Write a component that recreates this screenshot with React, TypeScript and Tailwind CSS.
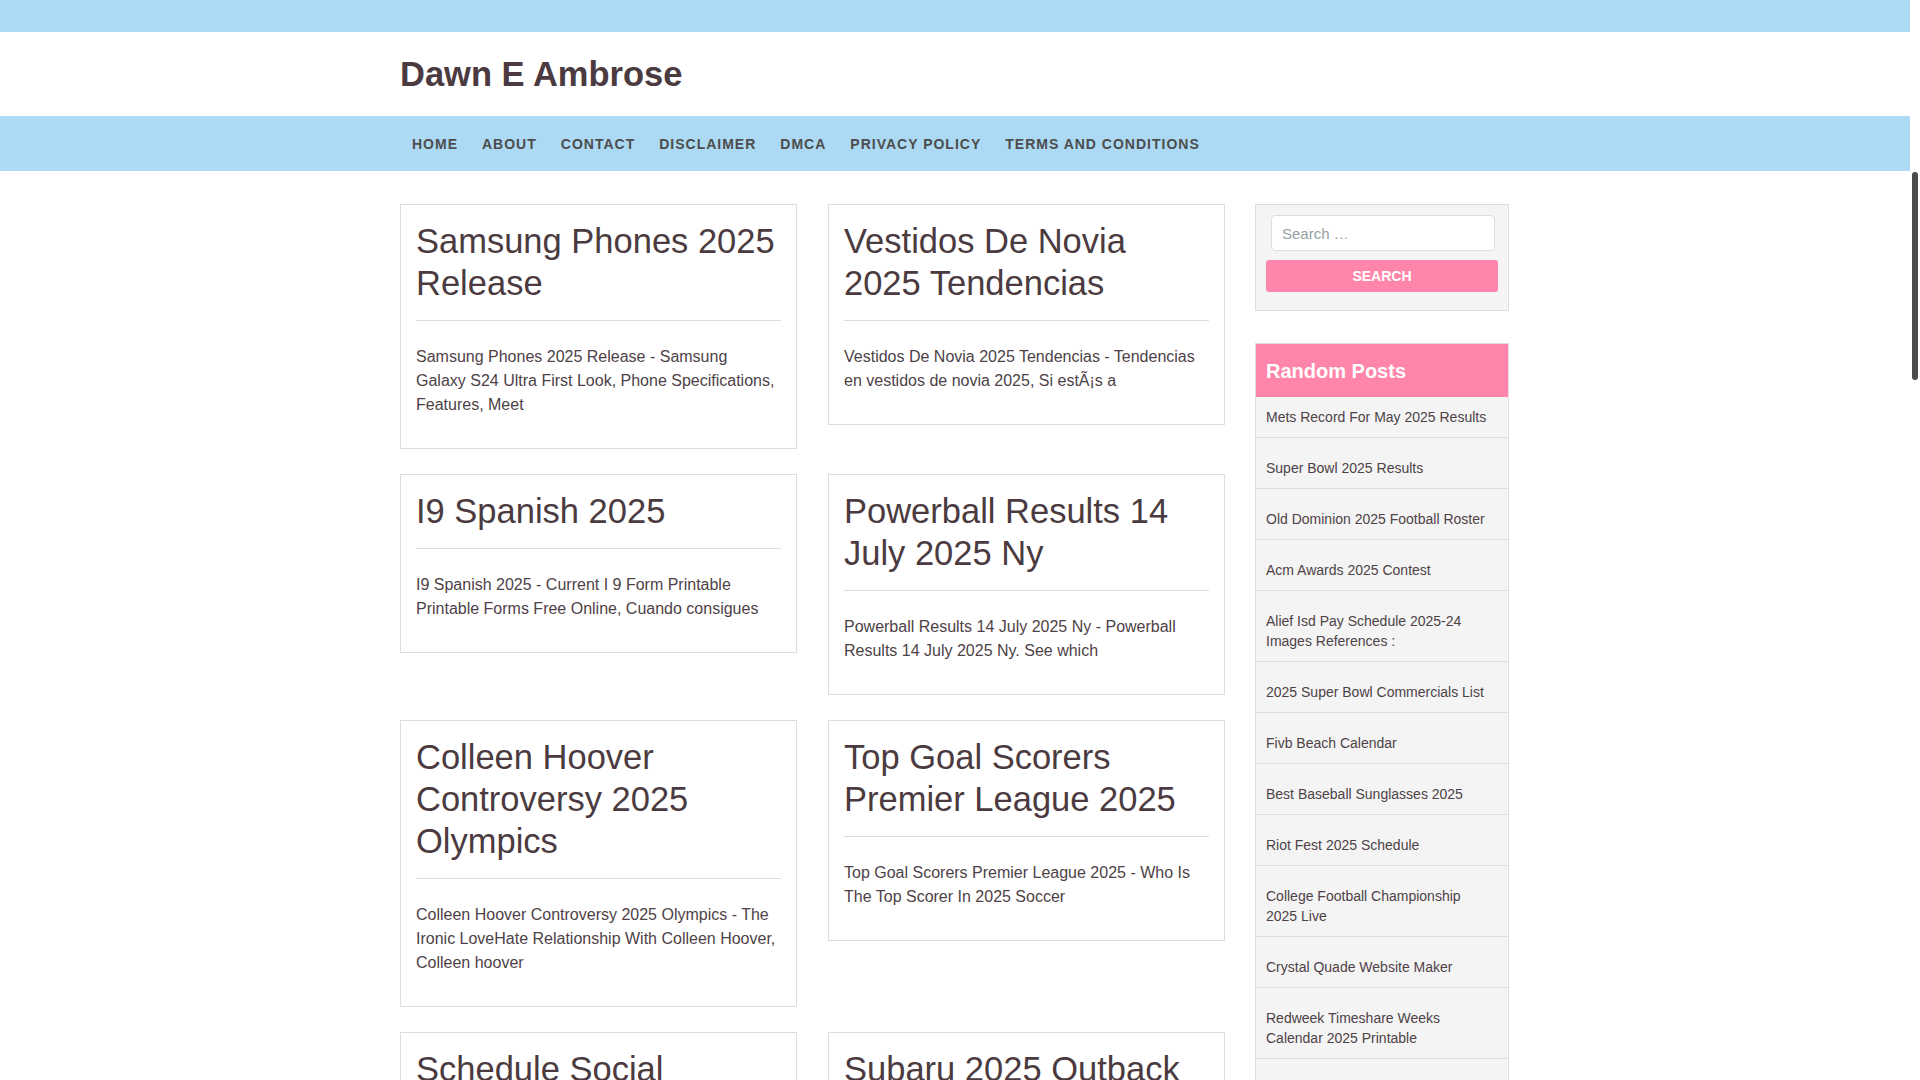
import React from 'react';

type Post = { title: string; excerpt: string };

const posts: Post[] = [
  {
    title: 'Samsung Phones 2025 Release',
    excerpt: 'Samsung Phones 2025 Release - Samsung Galaxy S24 Ultra First Look, Phone Specifications, Features, Meet',
  },
  {
    title: 'Vestidos De Novia 2025 Tendencias',
    excerpt: 'Vestidos De Novia 2025 Tendencias - Tendencias en vestidos de novia 2025, Si estÃ¡s a',
  },
  {
    title: 'I9 Spanish 2025',
    excerpt: 'I9 Spanish 2025 - Current I 9 Form Printable Printable Forms Free Online, Cuando consigues',
  },
  {
    title: 'Powerball Results 14 July 2025 Ny',
    excerpt: 'Powerball Results 14 July 2025 Ny - Powerball Results 14 July 2025 Ny. See which',
  },
  {
    title: 'Colleen Hoover Controversy 2025 Olympics',
    excerpt: 'Colleen Hoover Controversy 2025 Olympics - The Ironic LoveHate Relationship With Colleen Hoover, Colleen hoover',
  },
  {
    title: 'Top Goal Scorers Premier League 2025',
    excerpt: 'Top Goal Scorers Premier League 2025 - Who Is The Top Scorer In 2025 Soccer',
  },
  {
    title: 'Schedule Social Security Payments 2025',
    excerpt: 'Schedule Social Security Payments 2025 - Social Security Payment Schedule 2025, When Will You Get Paid',
  },
  {
    title: 'Subaru 2025 Outback Release Date',
    excerpt: 'Subaru 2025 Outback Release Date - The New Subaru Outback, Price, Specs And Release Date',
  },
];

const randomPosts = [
  'Mets Record For May 2025 Results',
  'Super Bowl 2025 Results',
  'Old Dominion 2025 Football Roster',
  'Acm Awards 2025 Contest',
  'Alief Isd Pay Schedule 2025-24 Images References :',
  '2025 Super Bowl Commercials List',
  'Fivb Beach Calendar',
  'Best Baseball Sunglasses 2025',
  'Riot Fest 2025 Schedule',
  'College Football Championship 2025 Live',
  'Crystal Quade Website Maker',
  'Redweek Timeshare Weeks Calendar 2025 Printable',
  'Nfl Draft Order 2025 Round 1',
  'Boston Marathon 2025 Route Map',
];

const menu = ['Home', 'About', 'Contact', 'Disclaimer', 'DMCA', 'Privacy Policy', 'Terms and Conditions'];

const PostCard: React.FC<{ post: Post }> = ({ post }) => (
  <article className="border border-[#dddddd] bg-white p-[15px]">
    <h2 className="border-b border-[#dddddd] pb-4 text-[34.5px] leading-[42px] font-normal text-[#4b3b40]">
      <a href="#">{post.title}</a>
    </h2>
    <p className="mt-6 mb-4 text-[16px] leading-6 text-[#4e4247]">{post.excerpt}</p>
  </article>
);

const App: React.FC = () => {
  return (
    <div className="relative h-screen overflow-hidden bg-white font-['Liberation_Sans',Arial,sans-serif]">
      {/* page area, leaves room for the window scrollbar on the right */}
      <div className="mr-[10px]">
        {/* top strip */}
        <div className="h-[32px] bg-[#acd9f3]" />

        <header className="h-[84px] flex items-center">
          <div className="w-[1110px] mx-auto">
            <h1 className="text-[34.5px] leading-[40px] font-bold text-[#4b3a40]">Dawn E Ambrose</h1>
          </div>
        </header>

        <nav className="h-[55px] bg-[#acd9f3]">
          <div className="w-[1110px] mx-auto h-full flex items-center">
            <ul className="flex">
              {menu.map(item => (
                <li key={item}>
                  <a href="#" className="px-3 text-[14px] font-bold uppercase tracking-[1px] text-[#4d4d4d]">
                    {item}
                  </a>
                </li>
              ))}
            </ul>
          </div>
        </nav>

        <div className="w-[1110px] mx-auto mt-[33px] pb-10 flex items-start gap-[30px]">
          <main className="w-[825px] grid grid-cols-2 items-start gap-x-[31px] gap-y-[25px]">
            {posts.map(p => (
              <PostCard key={p.title} post={p} />
            ))}
          </main>

          <aside className="w-[254px] flex flex-col gap-[32px]">
            {/* search widget */}
            <div className="border border-[#dddddd] bg-[#f4f4f4] px-[10px] pt-[10px] pb-[18px]">
              <input
                type="search"
                placeholder="Search …"
                className="block w-[224px] h-[36px] mx-[5px] rounded border border-[#dddddd] bg-white px-[10px] text-[15px] text-[#555] outline-none placeholder:text-[#93a3a3]"
              />
              <button className="mt-[9px] w-full h-[32px] rounded-[3px] bg-[#ff85ab] text-[14px] font-bold uppercase text-white">
                Search
              </button>
            </div>

            {/* random posts */}
            <div className="border border-[#dddddd] bg-[#f4f4f4]">
              <h3 className="h-[53px] flex items-center px-[10px] bg-[#ff85ab] text-[20px] font-bold text-white">
                Random Posts
              </h3>
              <ul>
                {randomPosts.map((t, i) => (
                  <li
                    key={t}
                    className={
                      i === 0
                        ? 'border-b border-[#dddddd] pl-[10px] pr-[14px] py-[10px] text-[14px] leading-5 text-[#4e4247]'
                        : 'border-b border-[#dddddd] pl-[10px] pr-[14px] pt-[20px] pb-[10px] text-[14px] leading-5 text-[#4e4247]'
                    }
                  >
                    <a href="#">{t}</a>
                  </li>
                ))}
              </ul>
            </div>
          </aside>
        </div>
      </div>

      {/* scrollbar thumb */}
      <div className="absolute right-[2px] top-[172px] w-[6px] h-[208px] rounded-full bg-[#4a4a4a]" />
    </div>
  );
};

export default App;
